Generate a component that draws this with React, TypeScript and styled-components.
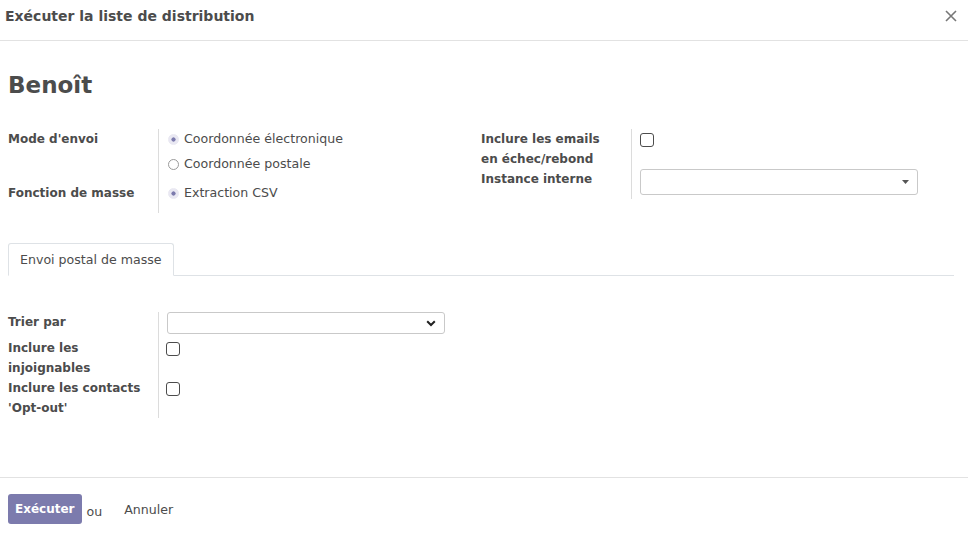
import React from 'react';
import styled, { createGlobalStyle } from 'styled-components';

const Global = createGlobalStyle`
  html, body { margin: 0; padding: 0; background: #fff; }
  body { font-family: "DejaVu Sans", "Liberation Sans", sans-serif; color: #4c4c4c; font-size: 12.6px; }
`;

const Dialog = styled.div`
  width: 968px;
  height: 542px;
  display: flex;
  flex-direction: column;
  background: #fff;
`;

const Header = styled.div`
  height: 41px;
  box-sizing: border-box;
  border-bottom: 1px solid #e2e2e2;
  display: flex;
  align-items: center;
  justify-content: space-between;
  padding: 0 11px 0 5px;
`;

const Title = styled.h4`
  margin: -8px 0 0;
  font-size: 14px;
  font-weight: bold;
  color: #4c4c4c;
`;

const Close = styled.button`
  border: 0;
  background: none;
  padding: 0;
  margin-top: -8px;
  display: flex;
  cursor: pointer;
`;

const Body = styled.div`
  flex: 1;
  padding: 0 14px 0 8px;
`;

const Name = styled.h1`
  margin: 28px 0 0;
  font-size: 23px;
  line-height: 32px;
  font-weight: bold;
  color: #4c4c4c;
`;

const Groups = styled.div<{ $top: number }>`
  display: flex;
  margin-top: ${p => p.$top}px;
`;

const Group = styled.div<{ $w: number }>`
  width: ${p => p.$w}px;
  display: grid;
  grid-template-columns: 151px 1fr;
  align-content: start;
`;

const Label = styled.div<{ $h?: number; $pt?: number }>`
  font-weight: bold;
  font-size: 12px;
  line-height: 20px;
  padding: ${p => p.$pt ?? 0}px 10px 0 0;
  ${p => (p.$h ? `height: ${p.$h}px;` : '')}
  box-sizing: border-box;
  border-right: 1px solid #dcdcdc;
`;

const Cell = styled.div<{ $pl?: number; $pt?: number }>`
  padding-left: ${p => p.$pl ?? 9}px;
  padding-top: ${p => p.$pt ?? 0}px;
`;

const Pad = styled.div<{ $h: number }>`
  height: ${p => p.$h}px;
  border-right: 1px solid #dcdcdc;
`;

const RadioList = styled.div`
  display: flex;
  flex-direction: column;
`;

const RadioItem = styled.label`
  display: flex;
  align-items: center;
  gap: 5px;
  line-height: 20px;
  height: 20px;
  margin-bottom: 5px;
`;

const RadioDot = styled.span<{ $on?: boolean }>`
  width: 11px;
  height: 11px;
  border-radius: 50%;
  box-sizing: border-box;
  border: 1px solid ${p => (p.$on ? '#e9e8f2' : '#9a9a9a')};
  background: ${p => (p.$on ? 'radial-gradient(circle, #7c7bad 0 1.8px, #e9e8f2 2.4px)' : '#fff')};
`;

const Check = styled.span`
  display: block;
  width: 12px;
  height: 12px;
  border: 1px solid #4c4c4c;
  border-radius: 3px;
  margin-top: 4px;
`;

const Select = styled.div<{ $w: number; $h: number }>`
  width: ${p => p.$w}px;
  height: ${p => p.$h}px;
  box-sizing: border-box;
  border: 1px solid #c9c9c9;
  border-radius: 3px;
  display: flex;
  align-items: center;
  justify-content: flex-end;
  padding-right: 8px;
`;

const Tabs = styled.div`
  margin-top: 30px;
  height: 32px;
  border-bottom: 1px solid #dee2e6;
  display: flex;
`;

const Tab = styled.div`
  height: 33px;
  box-sizing: border-box;
  padding: 0 11px 1px;
  border: 1px solid #dee2e6;
  border-bottom-color: #fff;
  border-radius: 3px 3px 0 0;
  display: flex;
  align-items: center;
  color: #4c4c4c;
`;

const Footer = styled.div`
  border-top: 1px solid #e2e2e2;
  height: 65px;
  box-sizing: border-box;
  padding: 16px 8px 0;
  display: flex;
  align-items: flex-start;
  gap: 5px;
`;

const Primary = styled.button`
  background: #7c7bad;
  color: #fff;
  border: 0;
  border-radius: 3px;
  height: 30px;
  padding: 0 7px;
  font: bold 12px "DejaVu Sans", sans-serif;
`;

const Or = styled.span`
  line-height: 33px;
  margin-top: 1px;
`;

const Link = styled.button`
  background: none;
  border: 0;
  color: #4c4c4c;
  font: 12.6px "DejaVu Sans", sans-serif;
  height: 30px;
  padding: 0 0 0 17px;
`;

const Caret = () => (
  <svg width="7" height="4" viewBox="0 0 7 4"><path d="M0 0h7L3.5 4z" fill="#555" /></svg>
);

const Chevron = () => (
  <svg width="10" height="7" viewBox="0 0 10 7"><path d="M1.2 1.2 5 5 8.8 1.2" stroke="#222" strokeWidth="2" fill="none" /></svg>
);

export default function App() {
  return (
    <Dialog>
      <Global />
      <Header>
        <Title>Exécuter la liste de distribution</Title>
        <Close aria-label="Fermer">
          <svg width="12" height="12" viewBox="0 0 12 12"><path d="M1 1l10 10M11 1 1 11" stroke="#777" strokeWidth="1.6" /></svg>
        </Close>
      </Header>
      <Body>
        <Name>Benoît</Name>
        <Groups $top={28}>
          <Group $w={473}>
            <Label>Mode d'envoi</Label>
            <Cell>
              <RadioList>
                <RadioItem><RadioDot $on />Coordonnée électronique</RadioItem>
                <RadioItem><RadioDot />Coordonnée postale</RadioItem>
              </RadioList>
            </Cell>
            <Label $pt={4}>Fonction de masse</Label>
            <Cell $pt={4}>
              <RadioItem><RadioDot $on />Extraction CSV</RadioItem>
            </Cell>
            <Pad $h={5} />
            <div />
          </Group>
          <Group $w={460}>
            <Label>Inclure les emails<br />en échec/rebond</Label>
            <Cell $pl={8}><Check /></Cell>
            <Label $h={30}>Instance interne</Label>
            <Cell $pl={8}>
              <Select $w={278} $h={26}><Caret /></Select>
            </Cell>
          </Group>
        </Groups>
        <Tabs><Tab>Envoi postal de masse</Tab></Tabs>
        <Groups $top={36}>
          <Group $w={473}>
            <Label $h={26}>Trier par</Label>
            <Cell $pl={8}>
              <Select $w={278} $h={22}><Chevron /></Select>
            </Cell>
            <Label>Inclure les<br />injoignables</Label>
            <Cell $pl={7}><Check /></Cell>
            <Label>Inclure les contacts<br />'Opt-out'</Label>
            <Cell $pl={7}><Check /></Cell>
          </Group>
        </Groups>
      </Body>
      <Footer>
        <Primary>Exécuter</Primary>
        <Or>ou</Or>
        <Link>Annuler</Link>
      </Footer>
    </Dialog>
  );
}
